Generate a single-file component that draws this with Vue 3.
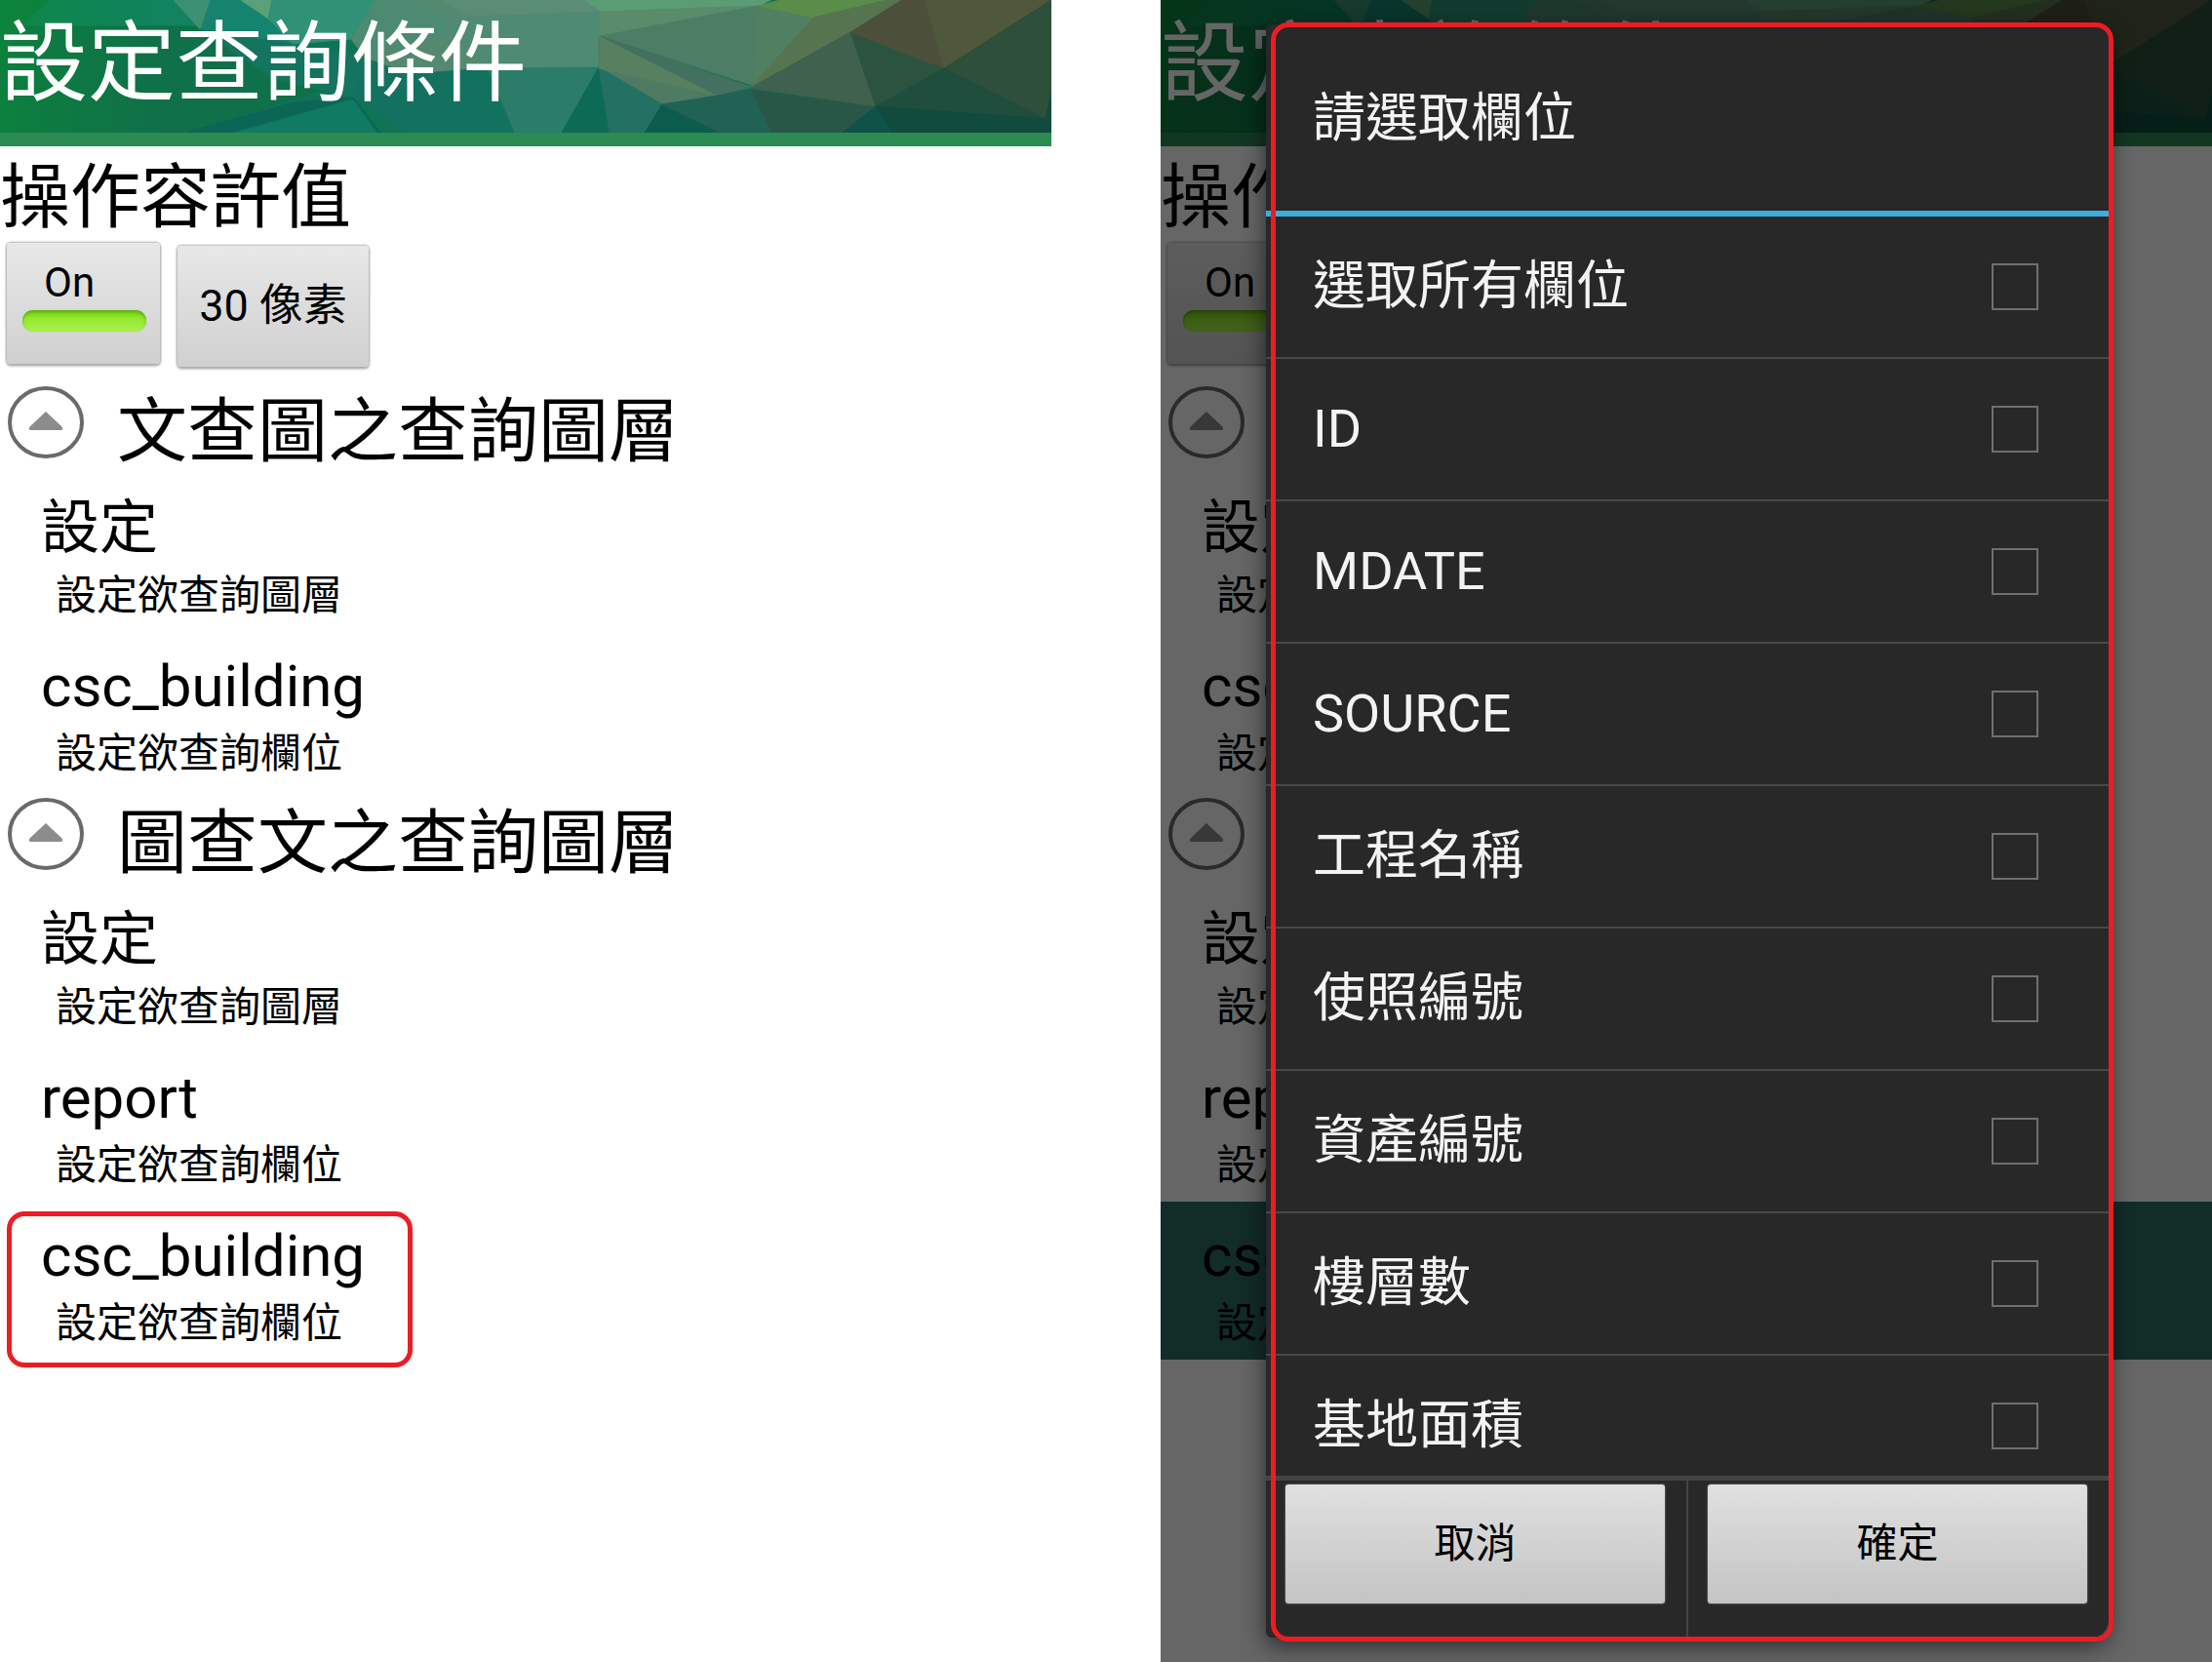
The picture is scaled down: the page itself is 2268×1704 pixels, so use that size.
<script setup>
import { ref } from 'vue'

const toleranceOn = ref(true)

const groups = [
  {
    title: '文查圖之查詢圖層',
    rows: [
      { name: '設定', hint: '設定欲查詢圖層' },
      { name: 'csc_building', hint: '設定欲查詢欄位' },
    ],
  },
  {
    title: '圖查文之查詢圖層',
    rows: [
      { name: '設定', hint: '設定欲查詢圖層' },
      { name: 'report', hint: '設定欲查詢欄位' },
      { name: 'csc_building', hint: '設定欲查詢欄位', target: true },
    ],
  },
]

const screens = [
  { id: 'list', dialog: false },
  { id: 'picker', dialog: true },
]

const fields = ref(
  ['選取所有欄位', 'ID', 'MDATE', 'SOURCE', '工程名稱', '使照編號', '資產編號', '樓層數', '基地面積'].map(
    (label) => ({ label, checked: false }),
  ),
)

// Facets of the header artwork, drawn back to front
const facets = [
  ['#11835e', '0,0 185,0 205,30 130,26 22,27'],
  ['#0e7a45', '0,0 50,0 22,27 0,60'],
  ['#0f7049', '22,27 205,27 275,62 330,92 190,136 0,136 0,60'],
  ['#16836f', '178,0 260,0 300,40 330,92 240,50 205,30'],
  ['#3d9073', '178,0 215,0 205,30'],
  ['#14745f', '205,30 330,50 375,60 362,100 280,80'],
  ['#5aa078', '247,0 279,0 275,19'],
  ['#2f9175', '279,0 385,0 360,40 300,45 275,19'],
  ['#4c8a72', '385,0 425,0 480,30 450,60 375,60 360,40'],
  ['#55896f', '425,0 600,0 616,12 616,70 500,70 420,76 375,60 480,30'],
  ['#5b8c76', '455,0 600,0 616,12 480,16'],
  ['#4f8b72', '450,20 616,12 616,70 500,70'],
  ['#137160', '362,100 375,60 420,76 500,70 532,136 420,136'],
  ['#0b6656', '190,136 300,105 362,100 390,136'],
  ['#107a63', '240,136 362,102 386,136'],
  ['#2b7d69', '500,70 614,69 576,136 528,136'],
  ['#4e7b62', '614,37 736,98 679,107 614,69'],
  ['#0c6a55', '614,69 576,136 625,136'],
  ['#247163', '614,69 679,107 661,136 625,136'],
  ['#0c5c4d', '679,107 661,136 738,136'],
  ['#5a9d75', '600,0 790,0 778,6 616,12'],
  ['#5a8b6b', '616,12 778,6 616,37'],
  ['#4e7d65', '616,37 778,6 774,88'],
  ['#517f62', '778,6 834,18 772,90'],
  ['#5a8d4a', '778,6 800,0 910,0 834,18'],
  ['#577450', '834,18 910,0 925,0 872,33 770,89'],
  ['#56805f', '616,37 736,98 614,70'],
  ['#44705f', '616,37 770,89 736,98'],
  ['#206254', '679,107 736,98 770,92 792,136 738,136'],
  ['#285748', '770,92 898,109 864,136 792,136'],
  ['#3f614d', '770,90 872,33 898,109'],
  ['#2c533f', '872,33 968,70 898,109'],
  ['#4c4f3a', '872,33 925,0 948,0 968,70'],
  ['#4f583d', '948,0 1078,0 968,70'],
  ['#2e4f39', '968,70 1078,0 1078,110 1072,122'],
  ['#1f4e3f', '968,70 1072,122 898,109'],
  ['#114b3d', '898,109 1072,122 1078,95 1078,136 914,136'],
  ['#0e524a', '898,109 914,136 864,136'],
]
</script>

<template>
  <main class="board">
    <section v-for="screen in screens" :key="screen.id" class="screen">
      <header class="app-bar">
        <svg class="app-bar-art" viewBox="0 0 1078 136" preserveAspectRatio="none" aria-hidden="true">
          <defs>
            <linearGradient :id="'edge-' + screen.id" x1="0" x2="1" y1="0" y2="0">
              <stop offset="0" stop-color="#0b8a36" stop-opacity="0.6" />
              <stop offset="1" stop-color="#0b8a36" stop-opacity="0" />
            </linearGradient>
          </defs>
          <rect width="1078" height="136" fill="#0f7355" />
          <polygon v-for="([color, points], i) in facets" :key="i" :fill="color" :stroke="color" :points="points" />
          <rect width="160" height="136" :fill="`url(#edge-${screen.id})`" />
        </svg>
        <h1 class="app-title">設定查詢條件</h1>
      </header>

      <section class="tolerance">
        <h2 class="tolerance-title">操作容許值</h2>
        <div class="tolerance-controls">
          <button
            type="button"
            class="key toggle"
            :aria-pressed="toleranceOn"
            @click="toleranceOn = !toleranceOn"
          >
            <span class="toggle-text">{{ toleranceOn ? 'On' : 'Off' }}</span>
            <span class="toggle-light" :class="{ off: !toleranceOn }"></span>
          </button>
          <button type="button" class="key pixels">30 像素</button>
        </div>
      </section>

      <section v-for="group in groups" :key="group.title">
        <div class="group-head">
          <button type="button" class="collapse" :aria-label="group.title">
            <svg viewBox="0 0 78 74" aria-hidden="true">
              <ellipse cx="39" cy="37" rx="37" ry="35" fill="none" stroke="#6a6a6a" stroke-width="4" />
              <path d="M39 26 L55 41 Q58 45 54 45 H24 Q20 45 23 41 Z" fill="#8c8c8c" />
            </svg>
          </button>
          <h2 class="group-title">{{ group.title }}</h2>
        </div>
        <button
          v-for="row in group.rows"
          :key="row.name"
          type="button"
          class="row"
          :class="{ pressed: row.target && screen.dialog }"
        >
          <span class="row-name">{{ row.name }}</span>
          <span class="row-hint">{{ row.hint }}</span>
          <span v-if="row.target && !screen.dialog" class="callout row-callout"></span>
        </button>
      </section>

      <div v-if="screen.dialog" class="scrim">
        <div class="dialog" role="dialog" aria-labelledby="dialog-title">
          <h2 id="dialog-title" class="dialog-title">請選取欄位</h2>
          <div class="fields">
            <label v-for="field in fields" :key="field.label" class="field">
              <span>{{ field.label }}</span>
              <input v-model="field.checked" type="checkbox" class="field-check" />
            </label>
          </div>
          <div class="actions">
            <div class="action"><button type="button" class="key action-key">取消</button></div>
            <div class="action"><button type="button" class="key action-key">確定</button></div>
          </div>
          <span class="callout dialog-callout"></span>
        </div>
      </div>
    </section>
  </main>
</template>

<style>
body {
  margin: 0;
  background: #fff;
}
</style>

<style scoped>
.board {
  display: grid;
  grid-template-columns: 1fr 1fr;
  column-gap: 112px;
  min-height: 100vh;
  font-family: Roboto, "Noto Sans CJK TC", sans-serif;
  color: #000;
}

.board * {
  box-sizing: border-box;
}

h1,
h2 {
  margin: 0;
  font-weight: 400;
}

button {
  margin: 0;
  padding: 0;
  border: 0;
  background: none;
  font: inherit;
  color: inherit;
}

.screen {
  position: relative;
  min-width: 0;
  overflow: hidden;
}

.app-bar {
  position: relative;
  height: 150px;
  border-bottom: 14px solid #2c8a53;
}

.app-bar-art {
  display: block;
  width: 100%;
  height: 136px;
}

.app-title {
  position: absolute;
  top: 0;
  left: 0;
  font-size: 90px;
  line-height: 132px;
  color: #fff;
  white-space: nowrap;
}

.tolerance {
  padding: 8px 0 10px;
}

.tolerance-title {
  font-size: 72px;
  line-height: 90px;
}

.tolerance-controls {
  display: flex;
  gap: 18px;
  height: 130px;
  padding: 1px 0 2px 7px;
}

.key {
  height: 124px;
  border-radius: 4px;
  background: linear-gradient(#e8e8e8, #d0d0d0);
  box-shadow: 0 0 2px 1px #b4b4b4, 0 2px 3px rgba(0, 0, 0, 0.4);
}

.toggle {
  display: flex;
  flex-direction: column;
  width: 157px;
  padding: 15px 14px 0 16px;
  font-size: 42px;
  line-height: 52px;
  text-align: left;
}

.toggle-text {
  padding-left: 22px;
}

.toggle-light {
  height: 22px;
  margin-top: 2px;
  border-radius: 11px;
  background: linear-gradient(#74cc14, #94ea2c 40%, #aaf050);
  box-shadow: inset 0 2px 3px #5fa818, 0 0 2px #b8e080;
}

.toggle-light.off {
  background: #aaa;
  box-shadow: none;
}

.pixels {
  align-self: flex-end;
  width: 196px;
  font-size: 45px;
  line-height: 124px;
}

.group-head {
  display: flex;
  gap: 34px;
  height: 98px;
  padding: 8px 8px 0;
}

.collapse {
  width: 78px;
  height: 74px;
}

.collapse svg {
  display: block;
}

.group-title {
  font-size: 72px;
  line-height: 93px;
  white-space: nowrap;
}

.row {
  position: relative;
  display: block;
  width: 100%;
  height: 162px;
  padding: 20px 0 0 42px;
  text-align: left;
}

.row.pressed {
  background: #2f6e64;
}

.row-name,
.row-hint {
  display: block;
}

.row-name {
  font-size: 60px;
  line-height: 72px;
}

.row-hint {
  padding: 0 0 4px 15px;
  font-size: 42px;
  line-height: 66px;
}

.callout {
  position: absolute;
  border: 5px solid #ec1c24;
  border-radius: 18px;
  pointer-events: none;
}

.row-callout {
  top: 10px;
  left: 7px;
  width: 416px;
  height: 160px;
}

.scrim {
  position: absolute;
  inset: 0;
  display: flex;
  padding: 25px 106px 25px 108px;
  background: rgba(0, 0, 0, 0.6);
}

.dialog {
  position: relative;
  display: flex;
  flex: 1;
  flex-direction: column;
  min-width: 0;
  border-radius: 6px 18px 18px 6px;
  background: #282828;
  box-shadow: 0 8px 24px rgba(0, 0, 0, 0.6);
  color: #f3f3f3;
}

.dialog-title {
  padding: 2px 0 0 48px;
  border-bottom: 6px solid #3aaee0;
  font-size: 54px;
  line-height: 189px;
}

.fields {
  flex: 1 1 0;
  min-height: 0;
  overflow: hidden;
}

.field {
  display: flex;
  align-items: center;
  justify-content: space-between;
  height: 146px;
  padding: 0 72px 0 48px;
  border-bottom: 2px solid #484848;
  font-size: 54px;
  line-height: 144px;
}

.field-check {
  width: 48px;
  height: 48px;
  margin: 0;
  border: 2px solid #707070;
  appearance: none;
}

.field-check:checked {
  background: #3aaee0;
}

.actions {
  display: flex;
  height: 166px;
  border-top: 5px solid #444;
}

.action {
  flex: 1;
  padding: 4px 22px 0 20px;
}

.action + .action {
  border-left: 2px solid #444;
}

.action-key {
  width: 100%;
  height: 122px;
  border-radius: 3px;
  background: linear-gradient(#e0e0e0, #c4c4c4);
  box-shadow: 0 0 2px #aaa;
  font-size: 42px;
  line-height: 122px;
  color: #000;
}

.dialog-callout {
  inset: -2px -5px -4px 5px;
}
</style>
